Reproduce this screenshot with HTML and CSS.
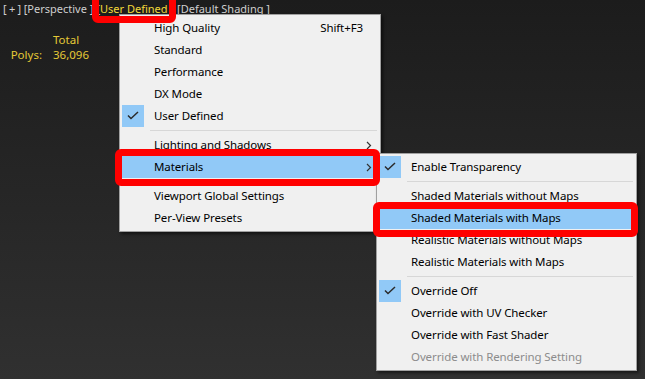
FILE: index.html
```html
<!DOCTYPE html>
<html lang="en">
<head>
    <meta charset="UTF-8">
    <meta name="viewport" content="width=device-width, initial-scale=1.0">
    <title>Viewport Menu</title>
    <link rel="stylesheet" href="styles.css">
</head>
<body>

<div class="viewport">
    <div class="vp-labels">
        <span class="lbl plus">[ + ]</span>
        <span class="lbl">[Perspective ]</span>
        <span class="lbl">[<span class="active">User Defined</span> ]</span>
        <span class="lbl">[Default Shading ]</span>
    </div>

    <div class="stats">
        <span></span><span>Total</span>
        <span>Polys:</span><span>36,096</span>
    </div>

    <!-- main dropdown -->
    <div class="menu main-menu">
        <div class="item"><span class="check"></span><span class="label">High Quality</span><span class="key">Shift+F3</span><span class="arrow"></span></div>
        <div class="item"><span class="check"></span><span class="label">Standard</span><span class="arrow"></span></div>
        <div class="item"><span class="check"></span><span class="label">Performance</span><span class="arrow"></span></div>
        <div class="item"><span class="check"></span><span class="label">DX Mode</span><span class="arrow"></span></div>
        <div class="item checked"><span class="check"><svg width="22" height="22" viewBox="0 0 22 22"><path d="M6 10.5 L9 13.5 L16 7" /></svg></span><span class="label">User Defined</span><span class="arrow"></span></div>
        <div class="sep"></div>
        <div class="item"><span class="check"></span><span class="label">Lighting and Shadows</span><span class="arrow"><svg width="6" height="9" viewBox="0 0 6 9"><path d="M1 1 L4.5 4.5 L1 8" /></svg></span></div>
        <div class="item hover"><span class="check"></span><span class="label">Materials</span><span class="arrow"><svg width="6" height="9" viewBox="0 0 6 9"><path d="M1 1 L4.5 4.5 L1 8" /></svg></span></div>
        <div class="sep"></div>
        <div class="item"><span class="check"></span><span class="label">Viewport Global Settings</span><span class="arrow"></span></div>
        <div class="item"><span class="check"></span><span class="label">Per-View Presets</span><span class="arrow"></span></div>
    </div>

    <!-- materials submenu -->
    <div class="menu sub-menu">
        <div class="item checked"><span class="check"><svg width="22" height="22" viewBox="0 0 22 22"><path d="M6 10.5 L9 13.5 L16 7" /></svg></span><span class="label">Enable Transparency</span></div>
        <div class="sep"></div>
        <div class="item"><span class="check"></span><span class="label">Shaded Materials without Maps</span></div>
        <div class="item hover"><span class="check"></span><span class="label">Shaded Materials with Maps</span></div>
        <div class="item"><span class="check"></span><span class="label">Realistic Materials without Maps</span></div>
        <div class="item"><span class="check"></span><span class="label">Realistic Materials with Maps</span></div>
        <div class="sep"></div>
        <div class="item checked"><span class="check"><svg width="22" height="22" viewBox="0 0 22 22"><path d="M6 10.5 L9 13.5 L16 7" /></svg></span><span class="label">Override Off</span></div>
        <div class="item"><span class="check"></span><span class="label">Override with UV Checker</span></div>
        <div class="item"><span class="check"></span><span class="label">Override with Fast Shader</span></div>
        <div class="item disabled"><span class="check"></span><span class="label">Override with Rendering Setting</span></div>
    </div>

    <!-- red annotation boxes -->
    <div class="callout callout-mode"></div>
    <div class="callout callout-materials"></div>
    <div class="callout callout-maps"></div>
</div>

</body>
</html>
```

FILE: styles.css
```css
html, body {
    margin: 0;
    padding: 0;
}

body {
    width: 645px;
    height: 379px;
    overflow: hidden;
    font-family: 'Noto Sans', 'Liberation Sans', sans-serif;
}

.viewport {
    position: relative;
    width: 645px;
    height: 379px;
    background: linear-gradient(to bottom, #1c1c1c, #303030);
}

.vp-labels {
    display: flex;
    gap: 3px;
    padding: 1px 0 0 3px;
    font-size: 11px;
    line-height: 16px;
    color: #cfcfcf;
    white-space: pre;
}

.vp-labels .plus {
    letter-spacing: -0.3px;
}

.vp-labels .active {
    color: #f2d83a;
}

.stats {
    display: grid;
    grid-template-columns: 42px auto;
    column-gap: 11px;
    width: 100px;
    margin: 15px 0 0 0;
    font-size: 11.5px;
    line-height: 15px;
    color: #e4c936;
}

.stats span:nth-child(odd) {
    text-align: right;
}

/* menus */
.menu {
    position: absolute;
    box-sizing: border-box;
    background: #f0f0f0;
    border: 1px solid #a0a0a0;
    padding: 2px 0;
    box-shadow: 2px 2px 3px rgba(0, 0, 0, 0.55);
    font-size: 11.5px;
    letter-spacing: -0.1px;
    color: #000;
}

.main-menu {
    left: 119px;
    top: 14px;
    width: 262px;
}

.sub-menu {
    left: 376px;
    top: 153px;
    width: 261px;
}

.item {
    display: flex;
    align-items: center;
    height: 22px;
    margin: 0 2px;
}

.item .check {
    width: 22px;
    height: 22px;
    flex: none;
}

.item.checked .check {
    background: #91c9f7;
}

.check svg path {
    fill: none;
    stroke: #2b2b2b;
    stroke-width: 1.5;
}

.item .label {
    flex: 1;
    margin-left: 10px;
    padding-bottom: 2px;
    white-space: nowrap;
}

.item .key {
    padding-bottom: 2px;
}

.item .arrow {
    width: 15px;
    flex: none;
    display: flex;
    align-items: center;
    padding-left: 3px;
    box-sizing: border-box;
}

.arrow svg path {
    fill: none;
    stroke: #333;
    stroke-width: 1.2;
}

.item.hover {
    background: #91c9f7;
}

.item.disabled {
    color: #8c8c8c;
}

.sep {
    height: 1px;
    margin: 3px 3px 3px 30px;
    background: #d7d7d7;
}

/* red highlight frames */
.callout {
    position: absolute;
    box-sizing: border-box;
    border: 7px solid #ff0000;
    border-radius: 6px;
}

.callout-mode {
    left: 92px;
    top: -8px;
    width: 84px;
    height: 31px;
}

.callout-materials {
    left: 115px;
    top: 149px;
    width: 265px;
    height: 37px;
}

.callout-maps {
    left: 373px;
    top: 202px;
    width: 265px;
    height: 35px;
}
```
